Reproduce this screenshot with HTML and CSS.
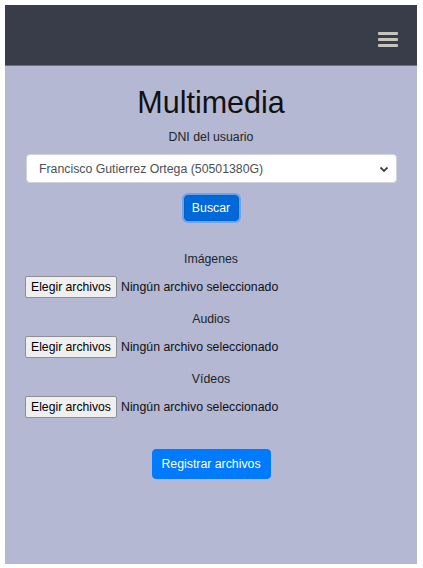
FILE: index.html
```html
<!DOCTYPE html>
<html lang="es">
<head>
<meta charset="utf-8">
<link rel="stylesheet" href="styles.css">
</head>
<body>
<div class="app">
  <header class="topbar">
    <button class="menu" aria-label="menu">
      <svg width="22" height="18" viewBox="0 0 22 18"><g fill="#c7c4bb"><rect x="1" y="2" width="20" height="3" rx="1"/><rect x="1" y="8" width="20" height="3" rx="1"/><rect x="1" y="14" width="20" height="3" rx="1"/></g></svg>
    </button>
  </header>
  <main class="content">
    <h1 class="title">Multimedia</h1>
    <label class="lbl">DNI del usuario</label>
    <div class="select">
      <span>Francisco Gutierrez Ortega (50501380G)</span>
      <svg width="10" height="8" viewBox="0 0 10 8"><path d="M1.5 2.5 L5 6 L8.5 2.5" fill="none" stroke="#444" stroke-width="1.8"/></svg>
    </div>
    <button class="btn btn-focus">Buscar</button>

    <div class="files">
      <p class="flabel">Imágenes</p>
      <div class="file"><span class="fbtn">Elegir archivos</span><span class="ftext">Ningún archivo seleccionado</span></div>
      <p class="flabel">Audios</p>
      <div class="file"><span class="fbtn">Elegir archivos</span><span class="ftext">Ningún archivo seleccionado</span></div>
      <p class="flabel">Vídeos</p>
      <div class="file"><span class="fbtn">Elegir archivos</span><span class="ftext">Ningún archivo seleccionado</span></div>
    </div>

    <button class="btn btn-reg">Registrar archivos</button>
  </main>
</div>
</body>
</html>
```
FILE: styles.css
```css
* { box-sizing: border-box; }
html, body { margin: 0; padding: 0; background: #fff; }
body { padding: 5px 6px 4px 5px; font-family: "Liberation Sans", Arial, sans-serif; color: #212529; }
.app { width: 412px; height: 559px; background: #b4b8d3; display: flex; flex-direction: column; }
.topbar { height: 61px; background: #393d4a; border-bottom: 1px solid #6c7084; display: flex; justify-content: flex-end; align-items: center; padding: 0 18px 0 0; }
.menu { background: none; border: 0; padding: 0; margin-top: 7px; display: flex; }
.content { display: flex; flex-direction: column; align-items: center; padding: 0 20px 0 20px; }
.title { margin: 18px 0 0 0; font-size: 30.5px; font-weight: 400; line-height: 36px; color: #111; }
.lbl { font-size: 12.3px; margin-top: 9px; line-height: 16px; }
.select { align-self: stretch; margin: 9px 0 0 1px; height: 29px; background: #fff; border: 1px solid #ced4da; border-radius: 4px; display: flex; align-items: center; justify-content: space-between; padding: 0 7px 0 12px; font-size: 12.3px; color: #495057; }
.btn { font-family: "Liberation Sans", Arial, sans-serif; font-size: 12.3px; color: #fff; border: 1px solid transparent; border-radius: 4px; }
.btn-focus { margin-top: 12px; width: 55px; height: 26px; background: #0069d9; border-color: #0062cc; box-shadow: 0 0 0 2px rgba(38,143,255,.5); padding: 0; }
.files { align-self: stretch; display: flex; flex-direction: column; align-items: center; margin-top: 30px; }
.flabel { margin: 0; font-size: 12.3px; line-height: 16px; }
.file { align-self: stretch; display: flex; align-items: center; margin: 9px 0 13px 0; font-size: 12.3px; }
.file:last-child { margin-bottom: 0; }
.fbtn { display: inline-flex; align-items: center; justify-content: center; width: 92px; height: 22px; background: #efefef; border: 1px solid #8f8f8f; border-radius: 2px; color: #000; font-size: 12.2px; }
.ftext { margin-left: 4px; color: #111; }
.btn-reg { margin-top: 31px; width: 119px; height: 30px; background: #007bff; border-color: #007bff; padding: 0; }
```
